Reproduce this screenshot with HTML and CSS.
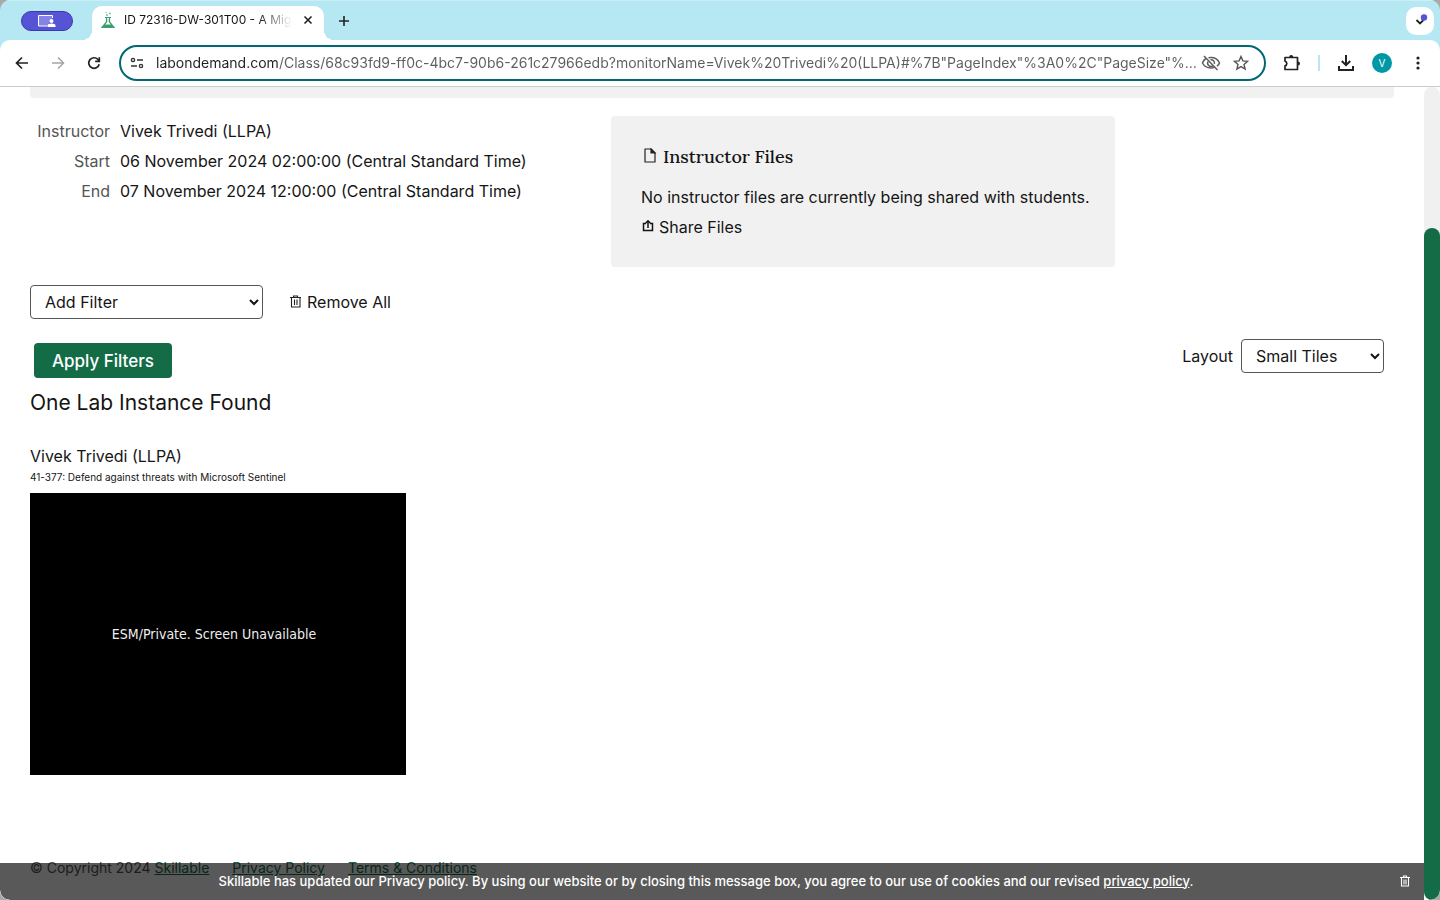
FILE: index.html
```html
<!DOCTYPE html>
<html lang="en">
<head>
<meta charset="utf-8">
<title>ID 72316-DW-301T00 - A Mig</title>
<link rel="stylesheet" href="styles.css">
</head>
<body>
<div class="window">
  <header class="tabstrip">
    <button class="share-pill" aria-label="Profile">
      <svg width="20" height="14" viewBox="0 0 20 14" fill="none" stroke="#fff"><path d="M10 12H1.500V1.500h14V4" fill="#8583e6"/><circle cx="14.500" cy="7" r="2" fill="#fff" stroke="none"/><path d="M10.500 13v-1.500q0-2 4-2t4 2V13z" fill="#fff" stroke="none"/></svg>
    </button>
    <div class="tab">
      <svg width="16" height="18" viewBox="0 0 16 18" fill="none" stroke="#3a9f6c"><path d="M5 6.500h6M6.500 7v4l-4.500 5.500h12l-4.500-5.500V7" stroke-width="1.200"/><path d="M4.500 13.500h7l2 3h-11z" fill="#3a9f6c" stroke="none"/><path d="M8 8v3" stroke="#9bd0b5"/><g fill="#7cc3a0" stroke="none"><circle cx="7" cy="4" r="1"/><circle cx="10" cy="2.500" r="1"/><circle cx="6" cy="1.500" r=".7"/></g></svg>
      <span class="tab-title">ID 72316-DW-301T00 - A Mig</span>
      <button class="icon-btn" aria-label="Close tab"><svg width="10" height="10" viewBox="0 0 10 10" stroke="#222" stroke-width="1.600"><path d="M1.500 1.500l7 7m0-7l-7 7"/></svg></button>
    </div>
    <button class="icon-btn new-tab" aria-label="New tab"><svg width="12" height="12" viewBox="0 0 12 12" stroke="#222" stroke-width="1.600"><path d="M6 1v10M1 6h10"/></svg></button>
    <button class="tab-search" aria-label="Search tabs"><svg width="16" height="16" viewBox="0 0 16 16" fill="none"><path d="M4.500 7L8 10.500 11.500 7" stroke="#222" stroke-width="1.800"/><circle cx="12" cy="4.500" r="3.200" fill="#5653d4"/></svg></button>
  </header>

  <nav class="toolbar">
    <button class="icon-btn" aria-label="Back"><svg width="16" height="16" viewBox="0 0 16 16" fill="none" stroke="#222" stroke-width="1.700"><path d="M14 8H3M8 2.500L2.500 8 8 13.500"/></svg></button>
    <button class="icon-btn" aria-label="Forward"><svg width="16" height="16" viewBox="0 0 16 16" fill="none" stroke="#a5a5a5" stroke-width="1.500"><path d="M2 8h11M8 2.500L13.500 8 8 13.500"/></svg></button>
    <button class="icon-btn" aria-label="Reload"><svg width="16" height="16" viewBox="0 0 16 16" fill="none" stroke="#222" stroke-width="1.700"><path d="M13.200 9.300A5.300 5.300 0 1 1 12 4.500L13.300 6"/><path d="M13.300 2.200V6.300H9.200"/></svg></button>
    <div class="omnibox">
      <svg width="14" height="14" viewBox="0 0 14 14" fill="none" stroke="#333" stroke-width="1.400"><circle cx="3" cy="4" r="1.600"/><path d="M7 4h6M1 10h6"/><circle cx="11" cy="10" r="1.600"/></svg>
      <input class="url" type="text" aria-label="Address" spellcheck="false" value='labondemand.com/Class/68c93fd9-ff0c-4bc7-90b6-261c27966edb?monitorName=Vivek%20Trivedi%20(LLPA)#%7B"PageIndex"%3A0%2C"PageSize"%…'>
      <button class="icon-btn" aria-label="Tracking blocked"><svg width="20" height="16" viewBox="0 0 20 16" fill="none" stroke="#5c5c5c" stroke-width="1.500"><path d="M5 3.500Q2.500 5 1.500 8q2.500 5 8.500 5 2 0 3.500-.6M7.500 2.800Q9 2.500 10 2.500q6 0 8.500 5.500-.8 1.900-2.500 3.200"/><path d="M7 6.500a3.400 3.400 0 0 0 4.700 4.500M9.500 4.800a3.400 3.400 0 0 1 3.900 4"/><path d="M3 1l13.500 14"/></svg></button>
      <button class="icon-btn" aria-label="Bookmark"><svg width="16" height="16" viewBox="0 0 16 16" fill="none" stroke="#555" stroke-width="1.400"><path d="M8 1.500l1.900 4.400 4.700.4-3.600 3.100 1.100 4.700L8 11.600l-4.100 2.500L5 9.400 1.400 6.300l4.700-.4z"/></svg></button>
    </div>
    <button class="icon-btn ext" aria-label="Extensions"><svg width="18" height="18" viewBox="0 0 18 18" fill="none" stroke="#222" stroke-width="1.700"><path d="M2 3.500h12.500v12H2v-3.600a2.500 2.500 0 0 0 0-4.800z" stroke-linejoin="round"/><path d="M6.200 3a2 2 0 0 1 4 0zM15 7.500a2 2 0 0 1 0 4z" fill="#222" stroke="none"/></svg></button>
    <span class="divider"></span>
    <button class="icon-btn" aria-label="Downloads"><svg width="18" height="18" viewBox="0 0 18 18" fill="none" stroke="#222" stroke-width="2"><path d="M9 1v10M4.800 7L9 11.200 13.200 7M2 12v4h14v-4"/></svg></button>
    <button class="avatar" aria-label="Account">V</button>
    <button class="icon-btn" aria-label="Menu"><svg width="4" height="16" viewBox="0 0 4 16" fill="#222"><circle cx="2" cy="3" r="1.600"/><circle cx="2" cy="8" r="1.600"/><circle cx="2" cy="13" r="1.600"/></svg></button>
  </nav>

  <div class="viewport">
    <div class="page">
      <main class="content">
        <div class="banner"></div>
        <section class="summary">
          <dl class="details">
            <dt>Instructor</dt><dd>Vivek Trivedi (LLPA)</dd>
            <dt>Start</dt><dd>06 November 2024 02:00:00 (Central Standard Time)</dd>
            <dt>End</dt><dd>07 November 2024 12:00:00 (Central Standard Time)</dd>
          </dl>
          <div class="files">
            <h2><svg width="18" height="18" viewBox="0 0 18 18" fill="none" stroke="#222" stroke-width="1.200"><path d="M4 1h6l4 4v9H4z" stroke-linejoin="round"/><path d="M10 1v4h4z" fill="#222"/></svg>Instructor Files</h2>
            <p>No instructor files are currently being shared with students.</p>
            <a href="#share"><svg width="14" height="14" viewBox="0 0 14 14" fill="none" stroke="#151515" stroke-width="1.500"><path d="M5 3.500H2.500v7h9v-7H9M7 8V1M4.800 3L7 .8 9.200 3"/></svg>Share Files</a>
          </div>
        </section>
        <div class="filters">
          <select aria-label="Add Filter" class="filter-select"><option>Add Filter</option></select>
          <a href="#remove" class="remove"><svg width="14" height="14" viewBox="0 0 14 14" fill="none" stroke="#222" stroke-width="1.100"><path d="M1 2.500h11M4.500 2V1h4v1M2.500 2.500v9.500h8.500V2.500M5.500 4.500v5.500M8 4.500v5.500"/></svg>Remove All</a>
        </div>
        <div class="actions">
          <button class="apply">Apply Filters</button>
          <label class="layout">Layout <select><option>Small Tiles</option></select></label>
        </div>
        <h1>One Lab Instance Found</h1>
        <article class="tile">
          <h3>Vivek Trivedi (LLPA)</h3>
          <p>41-377: Defend against threats with Microsoft Sentinel</p>
          <div class="screen">ESM/Private. Screen Unavailable</div>
        </article>
        <footer class="footer"><span>© Copyright 2024 <a href="#skillable">Skillable</a></span><a href="#privacy">Privacy Policy</a><a href="#terms">Terms &amp; Conditions</a></footer>
      </main>
      <aside class="notice">
        <p>Skillable has updated our Privacy policy. By using our website or by closing this message box, you agree to our use of cookies and our revised <a href="#policy">privacy policy</a>.</p>
        <button class="icon-btn" aria-label="Dismiss"><svg width="12" height="12" viewBox="0 0 12 12" fill="none" stroke="#fff" stroke-width="1.100"><path d="M1 2.500h10M4.500 2V1h3v1M2.500 2.500v8.500h7V2.500M5 4.500v5M7 4.500v5"/></svg></button>
      </aside>
    </div>
    <div class="scrollbar"><div class="thumb"></div></div>
  </div>
</div>
</body>
</html>
```
FILE: styles.css
```css
* { box-sizing: border-box; }
body { margin: 0; background: #a9a9a9; color: #151515; font: 16px/30px Inter, sans-serif; }
h1, h2, h3, p, dl, dd { margin: 0; font-weight: 400; }
button, select, input { font: inherit; color: inherit; }
svg { display: block; flex: none; }
.window { height: 100vh; display: flex; flex-direction: column; overflow: hidden; border-radius: 10px; background: #b5e8f3; }
.icon-btn { display: flex; align-items: center; justify-content: center; border: 0; padding: 0; background: none; }

.tabstrip { height: 40px; flex: none; display: flex; align-items: center; padding: 0 6px 0 21px; border-top: 1px solid #cceff7; }
.share-pill { width: 52px; height: 20px; display: flex; align-items: center; justify-content: center; padding: 0; border: 1px solid #3b37b5; border-radius: 10px; background: #5653d4; }
.tab { position: relative; align-self: flex-end; display: flex; align-items: center; width: 232px; height: 34px; margin-left: 19px; padding: 0 11px 6px 8px; border-radius: 10px 10px 0 0; background: #fff; }
.tab::before, .tab::after { content: ""; position: absolute; bottom: 0; width: 10px; height: 10px; }
.tab::before { right: 100%; background: radial-gradient(circle at 0 0, transparent 10px, #fff 10px); }
.tab::after { left: 100%; background: radial-gradient(circle at 100% 0, transparent 10px, #fff 10px); }
.tab-title { flex: 1; margin: 0 11px 0 8px; overflow: hidden; white-space: nowrap; font-size: 12px; line-height: 20px; -webkit-mask-image: linear-gradient(90deg, #000 80%, transparent); mask-image: linear-gradient(90deg, #000 80%, transparent); }
.new-tab { margin-left: 14px; }
.tab-search { margin-left: auto; width: 28px; height: 28px; display: flex; align-items: center; justify-content: center; padding: 0; border: 0; border-radius: 10px; background: #fff; }

.toolbar { height: 47px; flex: none; display: flex; align-items: center; gap: 20px; padding: 0 20px 0 14px; border-bottom: 1px solid #cbcbcb; border-radius: 10px 10px 0 0; background: #fff; }
.omnibox { flex: 1; height: 36px; display: flex; align-items: center; gap: 12px; margin-left: -3px; padding: 0 15px 0 9px; border: 2px solid #006874; border-radius: 18px; }
.url { flex: 1; min-width: 0; margin-right: -9px; padding: 0; border: 0; outline: 0; font-size: 14px; line-height: 20px; color: transparent; background: linear-gradient(90deg, #202124 123px, #5c5d60 123px); -webkit-background-clip: text; background-clip: text; }
.ext { margin-left: -3px; }
.divider { width: 2px; height: 16px; margin: 0 -3px; background: #b5e8f3; }
.avatar { width: 20px; height: 20px; margin: 0 4px 0 -3px; padding: 0; border: 0; border-radius: 50%; background: #0097a7; color: #fff; font-size: 10px; line-height: 20px; }

.viewport { flex: 1; min-height: 0; display: flex; background: #fff; }
.page { flex: 1; min-width: 0; position: relative; overflow: hidden; }
.content { padding: 0 30px; }
.banner { height: 11px; border-radius: 0 0 4px 4px; background: #f1f1f1; }
.summary { display: grid; grid-template-columns: 581px 504px; margin-top: 18px; }
.details { display: grid; grid-template-columns: 80px 1fr; column-gap: 10px; align-content: start; }
.details dt { text-align: right; color: #555; }
.files { padding: 26px 20px 25px 30px; border-radius: 4px; background: #f1f1f1; }
.files h2 { display: flex; align-items: center; gap: 4px; margin-bottom: 10px; font: 500 18px/30px Lora, "Liberation Serif", serif; }
.files a, .remove { display: flex; align-items: center; gap: 4px; color: inherit; text-decoration: none; }
.filters { display: flex; align-items: center; gap: 26px; margin-top: 18px; }
select { height: 34px; padding: 0 0 0 10px; border: 1px solid #555; border-radius: 4px; background: #fff; }
.filter-select { width: 233px; }
.actions { display: flex; justify-content: space-between; align-items: flex-start; padding: 18px 10px 0 4px; }
.apply { height: 35px; margin-top: 6px; padding: 0 18px; border: 0; border-radius: 4px; background: #146c47; color: #fff; font-size: 17px; font-weight: 500; }
.layout { display: flex; align-items: center; gap: 8px; height: 38px; }
.layout select { width: 143px; }
h1 { margin-top: 10px; font-size: 21px; }
.tile { width: 376px; margin-top: 24px; }
.tile h3 { font-size: 16px; line-height: 28px; }
.tile p { font-size: 10px; line-height: 14px; }
.screen { height: 282px; display: flex; align-items: center; justify-content: center; margin-top: 9px; padding-right: 8px; background: #000; color: #eee; font: 14px/20px "DejaVu Sans Condensed", "DejaVu Sans", sans-serif; }
.footer { display: flex; gap: 23px; margin-top: 78px; font-size: 14px; color: #555; }
.footer a { color: #146c47; }
.notice { position: absolute; inset: auto 0 0 0; display: flex; align-items: center; height: 37px; padding: 0 13px 2px; background: rgba(0, 0, 0, .65); color: #fff; font-size: 13px; line-height: 20px; border-radius: 0 0 0 10px; }
.notice p { flex: 1; text-align: center; font-weight: 500; }
.notice a { color: inherit; }
.scrollbar { width: 16px; display: flex; align-items: flex-end; border-radius: 8px; background: #f0f0f0; }
.thumb { width: 100%; height: calc(100% - 141px); border-radius: 8px; background: #146c47; }
```
